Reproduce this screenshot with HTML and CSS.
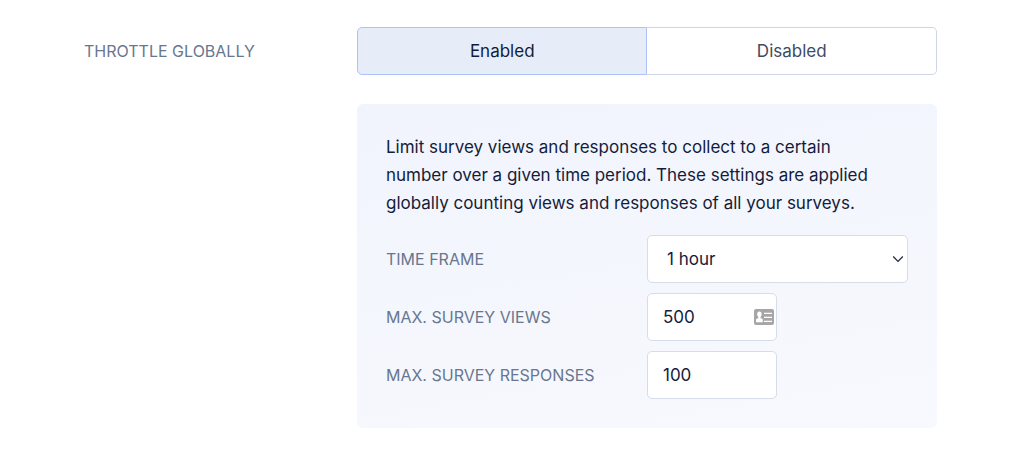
FILE: index.html
```html
<!DOCTYPE html>
<html lang="en">
<head>
  <meta charset="UTF-8">
  <meta name="viewport" content="width=device-width, initial-scale=1.0">
  <title>Survey Settings</title>
  <link rel="stylesheet" href="styles.css">
</head>
<body>

  <form class="settings" id="throttleForm">
    <div class="setting-label" id="throttleLabel">Throttle globally</div>

    <div class="setting-content">
      <div class="toggle" role="group" aria-labelledby="throttleLabel">
        <button type="button" class="toggle-button active" aria-pressed="true">Enabled</button>
        <button type="button" class="toggle-button" aria-pressed="false">Disabled</button>
      </div>

      <div class="panel">
        <p class="description">Limit survey views and responses to collect to a certain number over a given time period. These settings are applied globally counting views and responses of all your surveys.</p>

        <div class="form-group">
          <label for="timeFrame">Time frame</label>
          <div class="field">
            <select id="timeFrame" name="timeFrame">
              <option value="1h">1 hour</option>
              <option value="1d">1 day</option>
              <option value="1w">1 week</option>
            </select>
            <svg class="chevron" viewBox="0 0 12 8" aria-hidden="true">
              <path d="M1.2 1.5 L6 6.3 L10.8 1.5" fill="none" stroke="#1b2340" stroke-width="1.2"/>
            </svg>
          </div>
        </div>

        <div class="form-group">
          <label for="maxViews">Max. survey views</label>
          <div class="field field-small">
            <input type="text" id="maxViews" name="maxViews" value="500">
            <svg class="card-icon" viewBox="0 0 20 16" aria-hidden="true">
              <rect width="20" height="16" rx="2" fill="#a6a6a6"/>
              <ellipse cx="5.4" cy="5.2" rx="2.2" ry="2.7" fill="#fff"/>
              <path d="M4.3 7h2.2v2.1l2.3 1.2v3H2v-3l2.3-1.2z" fill="#fff"/>
              <path d="M10 4.3h8M10 8.3h8M10 12.3h8" stroke="#fff" stroke-width="1.3"/>
            </svg>
          </div>
        </div>

        <div class="form-group">
          <label for="maxResponses">Max. survey responses</label>
          <div class="field field-small">
            <input type="text" id="maxResponses" name="maxResponses" value="100">
          </div>
        </div>
      </div>
    </div>
  </form>

  <script>
    var buttons = document.querySelectorAll(".toggle-button");

    buttons.forEach(function(button) {
      button.addEventListener("click", function() {
        buttons.forEach(function(other) {
          other.classList.toggle("active", other === button);
          other.setAttribute("aria-pressed", other === button);
        });
      });
    });
  </script>
</body>
</html>
```
FILE: styles.css
```css
* {
  box-sizing: border-box;
}

body {
  margin: 0;
  font-family: Inter, sans-serif;
  font-size: 17px;
  color: #141c3a;
  background-color: #fff;
}

.settings {
  display: grid;
  grid-template-columns: 8fr 17fr;
  max-width: 1200px;
  margin: 0 auto;
  padding: 27px 87px 27px 84px;
}

.setting-label,
label {
  font-size: 16px;
  line-height: 48px;
  color: #68768f;
  text-transform: uppercase;
}

.toggle {
  display: flex;
}

.toggle-button {
  flex: 1;
  height: 48px;
  padding: 0;
  font: inherit;
  color: #414b61;
  background-color: #fff;
  border: 1px solid #ced6e6;
  cursor: pointer;
}

.toggle-button:first-child {
  border-radius: 5px 0 0 5px;
}

.toggle-button:last-child {
  border-left: none;
  border-radius: 0 5px 5px 0;
}

.toggle-button.active {
  color: #141c3a;
  background-color: #e6ecf8;
  border: 1px solid #afc1fb;
}

.panel {
  margin-top: 29px;
  padding: 29px;
  background: linear-gradient(170deg, #f1f4fd, #f8f9fe);
  border-radius: 6px;
}

.description {
  margin: 0 0 18px;
  padding-right: 20px;
  line-height: 28px;
}

.form-group {
  display: grid;
  grid-template-columns: 1fr 1fr;
}

.form-group + .form-group {
  margin-top: 10px;
}

.field {
  position: relative;
}

.field-small {
  width: 50%;
}

input,
select {
  display: block;
  width: 100%;
  height: 48px;
  padding: 0 15px;
  font: inherit;
  color: #141c3a;
  background-color: #fff;
  border: 1px solid #d5dde8;
  border-radius: 5px;
}

select {
  padding: 0 19px;
  appearance: none;
}

.chevron {
  position: absolute;
  top: 20px;
  right: 4px;
  width: 12px;
  height: 8px;
  pointer-events: none;
}

.card-icon {
  position: absolute;
  top: 16px;
  right: 3px;
  width: 20px;
  height: 16px;
}
```
